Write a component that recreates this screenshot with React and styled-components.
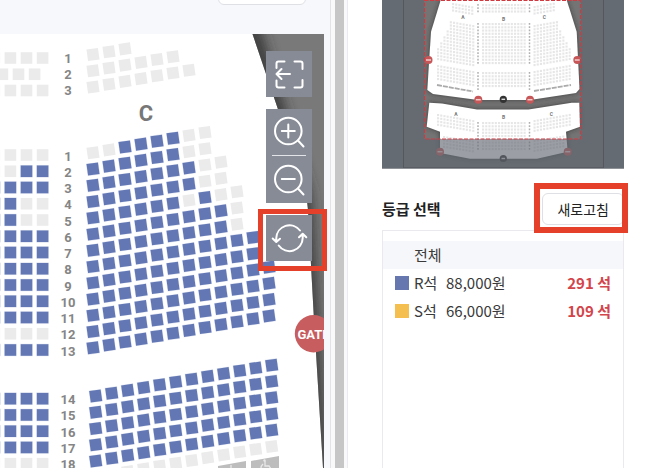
import React from 'react'
import styled, { createGlobalStyle } from 'styled-components'

const GlobalStyle = createGlobalStyle`
	* {
		box-sizing: border-box;
	}

	body {
		margin     : 0;
		background : #fff;
		color      : #3a3a3a;
		font-family: "Noto Sans CJK KR", sans-serif;
		overflow   : hidden;
	}
`

const Page = styled.div`
	display   : flex;
	min-height: 100vh;
`

const MapPane = styled.main`
	flex          : 1;
	display       : flex;
	flex-direction: column;
	min-width     : 0;
	border-right  : 1px solid #e3e3e7;
	background    : #f7f8fb;
`

const MapHeader = styled.header`
	display        : flex;
	justify-content: flex-end;
	height         : 34px;
	padding-right  : 24px;
	overflow       : hidden;
`

const OutlineButton = styled.button`
	height       : 32px;
	padding      : 0 14px;
	border       : 1px solid #dfe0e5;
	border-radius: 6px;
	background   : #fff;
	color        : #222;
	font-family  : inherit;
	font-size    : 14px;
	line-height  : 20px;
`

const DateButton = styled(OutlineButton)`
	width     : 88px;
	margin-top: -27px;
`

const MapArea = styled.section`
	position    : relative;
	flex        : 1;
	display     : flex;
	margin-right: 6px;
`

const SeatMap = styled.svg`
	flex       : 1;
	min-width  : 0;
	height     : calc(100vh - 34px);
	font-family: Roboto, sans-serif;
	font-weight: 700;
	background : #fff;
`

const Controls = styled.div`
	position      : absolute;
	top           : 17px;
	right         : 12px;
	display       : flex;
	flex-direction: column;
	gap           : 12px;
`

const ControlGroup = styled.div`
	position  : relative;
	width     : 46px;
	background: #868b96;
`

const ControlButton = styled.button`
	display   : block;
	width     : 46px;
	height    : ${props => (props.$tall ? 47 : 46)}px;
	padding   : 0;
	border    : 0;
	background: transparent;

	svg {
		display        : block;
		fill           : none;
		stroke         : #fff;
		stroke-width   : 2;
		stroke-linecap : round;
		stroke-linejoin: round;
	}
`

const Divider = styled.hr`
	position  : absolute;
	top       : 46px;
	left      : 6px;
	right     : 6px;
	height    : 1px;
	margin    : 0;
	border    : 0;
	background: #e3e4e8;
`

const Highlight = styled.span`
	position      : absolute;
	inset         : ${props => props.$inset};
	border        : ${props => props.$size}px solid #e5402a;
	pointer-events: none;
`

const Gutter = styled.div`
	width       : 17px;
	padding     : 0 3px 0 4px;
	border-right: 1px solid #ebebed;
	background  : #f9f9fa;
`

const Bar = styled.div`
	width     : 9px;
	height    : 100%;
	background: #c6c6c6;
`

const SidePane = styled.aside`
	display       : flex;
	flex-direction: column;
	width         : 302px;
	padding       : 0 26px 0 34px;
`

const MiniMap = styled.svg`
	display    : block;
	width      : 100%;
	height     : auto;
	font-family: Roboto, sans-serif;
	font-weight: 700;
`

const GradeHeader = styled.div`
	display        : flex;
	align-items    : center;
	justify-content: space-between;
	padding        : 24px 0 5px;
`

const GradeTitle = styled.h2`
	margin     : 0;
	color      : #222;
	font-size  : 15px;
	font-weight: 700;
	line-height: 22px;
`

const RefreshWrap = styled.div`
	position: relative;
	display : flex;
`

const GradePanel = styled.div`
	flex         : 1;
	padding-top  : 10px;
	border       : 1px solid #e9e9ee;
	border-bottom: 0;
`

const GradeTable = styled.table`
	width          : 100%;
	border-collapse: collapse;
	font-size      : 15px;
	line-height    : 22px;
`

const GradeRow = styled.tr`
	height    : 28px;
	background: ${props => (props.$all ? '#f6f7fb' : 'transparent')};
`

const Cell = styled.td`
	padding    : 0;
	white-space: nowrap;
`

const NameCell = styled.th`
	width      : 63px;
	padding    : 0 0 0 ${props => (props.$all ? 31 : 12)}px;
	font-weight: 400;
	text-align : left;
	white-space: nowrap;
`

const Swatch = styled.span`
	display       : inline-block;
	width         : 14px;
	height        : 14px;
	margin-right  : 5px;
	background    : ${props => props.$color};
	vertical-align: -1px;
`

const Count = styled(Cell)`
	padding-right: 12px;
	color        : #d2454b;
	font-weight  : 700;
	text-align   : right;
`

const BLUE = '#6277b3'
const EMPTY = '#ebebeb'
const PITCH = 16.25

// b: on sale, g: taken, first letter is the seat next to the aisle
const upperRight = ['ggg', 'gggggg', 'ggggggg']

const middleRight = [
	'ggbbbbgg',
	'bbbbbbgg',
	'bbbbbbbgg',
	'bbbbbbbgg',
	'bbbbbbgbgg',
	'bbbbbbbbbg',
	'bbbbbbbbbg',
	'bbbbbbbbbbb',
	'bbbbbbbbbbb',
	'bbbbbbbbbbbb',
	'bbbbbbbbbbbb',
	'bbbbbbbbbbbb',
	'bbbbbbbbbbbb',
]

const lowerRight = [
	'bbbbbbbbbbbb',
	'bbbbbbbbbbbb',
	'bbbbbbbbbbbb',
	'bbbbbbbbbbbb',
	'bbbbbbbbbbbb',
	'gggggggggggg',
]

const upperLeft = ['gggg', 'gggg', 'gggg']

const middleLeft = [
	'gggg', 'bbgg', 'bbbb', 'ggbb', 'ggbb', 'bbbb', 'bbbb',
	'bbbb', 'bbbb', 'bbbb', 'bbbb', 'gggg', 'bbbb',
]

const lowerLeft = ['bbbb', 'bbbb', 'bbbb', 'bbbb', 'gggg']

const grades = [
	{ name: 'R석', price: '88,000원', count: '291 석', color: '#6577ae' },
	{ name: 'S석', price: '66,000원', count: '109 석', color: '#f5bf50' },
]

function Seats({ rows, x, y, dx, dy = 0, angle = 0, shifts = [] }) {
	return rows.map((row, r) =>
		row.split('').map((seat, c) => {
			const cx = x + dx * c + (shifts[r] || 0)
			const cy = y + PITCH * r + dy * c

			return (
				<rect
					key={`${r}-${c}`}
					x={cx - 5.8}
					y={cy - 5.8}
					width="11.6"
					height="11.6"
					fill={seat === 'b' ? BLUE : EMPTY}
					stroke={seat === 'b' ? '#e6eaf5' : 'none'}
					strokeWidth="1"
					paintOrder="stroke"
					transform={`rotate(${angle} ${cx} ${cy})`}
				/>
			)
		})
	)
}

function RowNumbers({ from, to, y }) {
	const numbers = []
	for (let n = from; n <= to; n++) numbers.push(n)

	return (
		<g fill="#858585" fontSize="13" textAnchor="middle">
			{numbers.map((n, i) => <text key={n} x="68" y={y + PITCH * i}>{n}</text>)}
		</g>
	)
}

function MainMap() {
	return (
		<SeatMap viewBox="0 34 324 434" preserveAspectRatio="xMaxYMin slice" role="img" aria-label="좌석 배치도">
			<defs>
				<filter id="edge" x="-50%" y="-20%" width="200%" height="140%">
					<feGaussianBlur stdDeviation="7" />
				</filter>
				<clipPath id="outside">
					<path d="M252.500 34L306 192L308 210L314 320L323 468H324V34Z" />
				</clipPath>
			</defs>

			<g clipPath="url(#outside)">
				<rect x="240" y="34" width="84" height="434" fill="#797979" />
				<path d="M249 20L302 192L304 210L310 320L319 480" fill="none" stroke="#333" strokeWidth="15" filter="url(#edge)" />
			</g>

			<Seats rows={upperLeft} x={42.6} y={58} dx={-16.1} shifts={[0, -8, 0]} />
			<Seats rows={middleLeft} x={42.6} y={155} dx={-16.1} />
			<Seats rows={lowerLeft} x={42.6} y={398.7} dx={-16.1} />

			<Seats rows={upperRight} x={93} y={54.5} dx={16} dy={-2.8} angle={-8} />
			<Seats rows={middleRight} x={93} y={152.8} dx={16} dy={-2.9} angle={-8} />
			<Seats rows={lowerRight} x={95.7} y={396} dx={16} dy={-2.8} angle={-8} />

			{/* wheelchair seats */}
			<g fill="#bdbdbd">
				<path d="M251 461L279 456V468H251Z" />
				<path d="M218 466L246 461V468H218Z" />
			</g>
			<g fill="none" stroke="#e8e8e8" strokeWidth="1.300">
				<path d="M265 461V466H269L271 469M263 464Q259 468 263 470" />
				<path d="M231 465V469" />
			</g>
			<circle cx="264.500" cy="460.500" r="1.200" fill="#e8e8e8" />

			<RowNumbers from={1} to={3} y={62.5} />
			<RowNumbers from={1} to={13} y={160.7} />
			<RowNumbers from={14} to={18} y={404.2} />
			<text x="146" y="121" fill="#777" fontSize="22" textAnchor="middle">C</text>

			<circle cx="313.500" cy="333.700" r="18.700" fill="#c75d5f" />
			<text x="297.500" y="339" fill="#fff" fontSize="13">GATE</text>
		</SeatMap>
	)
}

function MiniSeats({ x, y, cols, rows, slope = 0, skip = () => false }) {
	const dots = []
	for (let r = 0; r < rows; r++) {
		for (let c = 0; c < cols; c++) {
			if (!skip(r, c)) {
				dots.push(<rect key={`${r}-${c}`} x={x + c * 3.2} y={y + r * 3.25 + c * slope} width="2.100" height="2.100" />)
			}
		}
	}
	return <g fill="#d8d8d8" fillOpacity=".65">{dots}</g>
}

function MiniNumbers({ x, y, rows }) {
	return (
		<path
			d={`M${x} ${y}v${rows * 3.25}`}
			stroke="#b0b0b0"
			strokeWidth="1.500"
			strokeDasharray="1.800 1.450"
		/>
	)
}

const hall = 'M440.700 0L431 31.700L427.300 90L433 94L478 100H530L576 93L579.500 89L576.700 31.700L566.700 0Z'
const balcony = 'M429.300 102.700L442 103.500L477 109.500H528.500L571.700 102.700H579.300L580 126.700L566 131.700L567.700 151.700L537 158.700H470L440 153L440 131.700L426.700 126.700Z'

function Overview() {
	const stair = (r, c) => c > 7 + r / 2.2

	return (
		<MiniMap viewBox="382 0 242 169" role="img" aria-label="전체 좌석 미리보기">
			<defs>
				<filter id="soft" x="-20%" y="-20%" width="140%" height="140%">
					<feGaussianBlur stdDeviation="2.500" />
				</filter>
			</defs>
			<rect x="382" y="0" width="242" height="169" fill="#666b70" />
			<rect x="403.500" y="-2" width="200" height="170" fill="#676b6c" stroke="#505356" />
			<rect x="424" y="0" width="157" height="139" fill="#747474" />
			<g fill="#222" opacity=".65" filter="url(#soft)">
				<path d={hall} />
				<path d={balcony} />
			</g>
			<path d={hall} fill="#fff" />
			<path d={balcony} fill="#fff" />

			<MiniSeats x={437} y={19} cols={12} rows={13} slope={0.55} skip={(r, c) => stair(r, 11 - c)} />
			<MiniSeats x={452} y={3} cols={7} rows={3} slope={0.55} />
			<MiniSeats x={437} y={65} cols={12} rows={5} slope={0.55} />
			<MiniSeats x={482} y={4} cols={14} rows={3} />
			<MiniSeats x={482} y={23} cols={14} rows={13} />
			<MiniSeats x={482} y={72} cols={14} rows={5} />
			<MiniSeats x={533.5} y={6} cols={7} rows={3} slope={-0.55} />
			<MiniSeats x={533.5} y={25} cols={12} rows={13} slope={-0.55} skip={stair} />
			<MiniSeats x={533.5} y={71} cols={12} rows={5} slope={-0.55} />
			<MiniSeats x={437} y={114} cols={12} rows={4} slope={0.55} />
			<MiniSeats x={482} y={122} cols={14} rows={9} />
			<MiniSeats x={533.5} y={120} cols={12} rows={4} slope={-0.55} />
			<MiniSeats x={443} y={136} cols={10} rows={4} slope={0.5} />
			<MiniSeats x={533.5} y={140} cols={10} rows={4} slope={-0.5} />

			<g fill="none" stroke="#aaa" strokeWidth="1.800" strokeDasharray="5 1">
				<path d="M437 85L473 91.500" />
				<path d="M534 91L571 85" />
			</g>
			{[478, 529.5].map(x => (
				<g key={x}>
					<MiniNumbers x={x} y={4} rows={3} />
					<MiniNumbers x={x} y={23} rows={13} />
					<MiniNumbers x={x} y={72} rows={6} />
					<MiniNumbers x={x} y={122} rows={9} />
				</g>
			))}

			<g fill="#777" fontSize="5" textAnchor="middle">
				<text x="463" y="18.500">A</text>
				<text x="503.500" y="21">B</text>
				<text x="544.500" y="18.500">C</text>
				<text x="456" y="115.500">A</text>
				<text x="503.500" y="118.500">B</text>
				<text x="551.500" y="115.500">C</text>
			</g>

			{[[428.5, 60], [577.3, 60], [478.3, 99.7], [530, 99.7], [440, 151.7], [567.7, 151.7]].map(([x, y]) => (
				<g key={`${x}-${y}`}>
					<circle cx={x} cy={y} r="4" fill="#c75658" />
					<path d={`M${x - 2.5} ${y}h5`} stroke="#f0cccc" strokeWidth="1.500" />
				</g>
			))}
			{[99.3, 158.5].map(y => (
				<g key={y}>
					<circle cx="503.300" cy={y} r="3.600" fill="#333" />
					<path d={`M501.500 ${y}h3.600`} stroke="#ddd" strokeWidth="1.400" />
				</g>
			))}

			<path d="M382 0H424V139H581V0H624V169H382Z" fill="#666b74" fillOpacity=".65" />
			<path d="M403.500 0V168H603.500V0" fill="none" stroke="#54575b" />
			<rect x="424.500" y=".500" width="156" height="138.500" fill="none" stroke="#cf3a40" strokeWidth="1.200" strokeDasharray="4 1.500" />
			<path d="M382 168.500H624" stroke="#8f9296" />
		</MiniMap>
	)
}

function App() {
	return (
		<>
			<GlobalStyle />
			<Page>
				<MapPane>
					<MapHeader>
						<DateButton type="button" aria-label="날짜 변경" />
					</MapHeader>
					<MapArea>
						<MainMap />
						<Controls>
							<ControlGroup>
								<ControlButton type="button" aria-label="이전 화면">
									<svg width="46" height="46" viewBox="0 0 46 46">
										<path d="M18.500 10.500H12.500Q10.500 10.500 10.500 12.500V17M10.500 29.500V34.500Q10.500 36.500 12.500 36.500H18.500M28.500 10.500H34.500Q36.500 10.500 36.500 12.500V18M28.500 36.500H34.500Q36.500 36.500 36.500 34.500V29" />
										<path d="M24 23H10.500M15.500 18L10.500 23L15.500 28" />
									</svg>
								</ControlButton>
							</ControlGroup>
							<ControlGroup>
								<ControlButton type="button" aria-label="확대" $tall>
									<svg width="46" height="47" viewBox="0 0 46 47">
										<circle cx="22.300" cy="22" r="13.300" />
										<path d="M32 31.500L37.500 37.500M15.800 22H28.800M22.300 15.500V28.500" />
									</svg>
								</ControlButton>
								<Divider />
								<ControlButton type="button" aria-label="축소" $tall>
									<svg width="46" height="47" viewBox="0 0 46 47">
										<circle cx="22.300" cy="23" r="13.300" />
										<path d="M32 32.500L37.500 38.500M15.800 23H28.800" />
									</svg>
								</ControlButton>
							</ControlGroup>
							<ControlGroup>
								<ControlButton type="button" aria-label="새로고침">
									<svg width="46" height="46" viewBox="0 0 46 46">
										<path d="M10.300 26V23A13.200 13.200 0 0 1 34 15.500M6.700 23.500L10.300 27L14 23.700" />
										<path d="M36.700 19.500V23A13.200 13.200 0 0 1 12.700 30.500M33 22.300L36.700 18.700L40.300 22.300" />
									</svg>
								</ControlButton>
								<Highlight $inset="-6px -15px -10px -8px" $size={5} />
							</ControlGroup>
						</Controls>
					</MapArea>
				</MapPane>

				<Gutter><Bar /></Gutter>

				<SidePane>
					<Overview />
					<GradeHeader>
						<GradeTitle>등급 선택</GradeTitle>
						<RefreshWrap>
							<OutlineButton type="button">새로고침</OutlineButton>
							<Highlight $inset="-10px -4px -8px -8px" $size={6} />
						</RefreshWrap>
					</GradeHeader>
					<GradePanel>
						<GradeTable>
							<tbody>
								<GradeRow $all>
									<NameCell scope="row" colSpan="3" $all>전체</NameCell>
								</GradeRow>
								{grades.map(grade => (
									<GradeRow key={grade.name}>
										<NameCell scope="row"><Swatch $color={grade.color} />{grade.name}</NameCell>
										<Cell>{grade.price}</Cell>
										<Count>{grade.count}</Count>
									</GradeRow>
								))}
							</tbody>
						</GradeTable>
					</GradePanel>
				</SidePane>
			</Page>
		</>
	)
}

export default App
